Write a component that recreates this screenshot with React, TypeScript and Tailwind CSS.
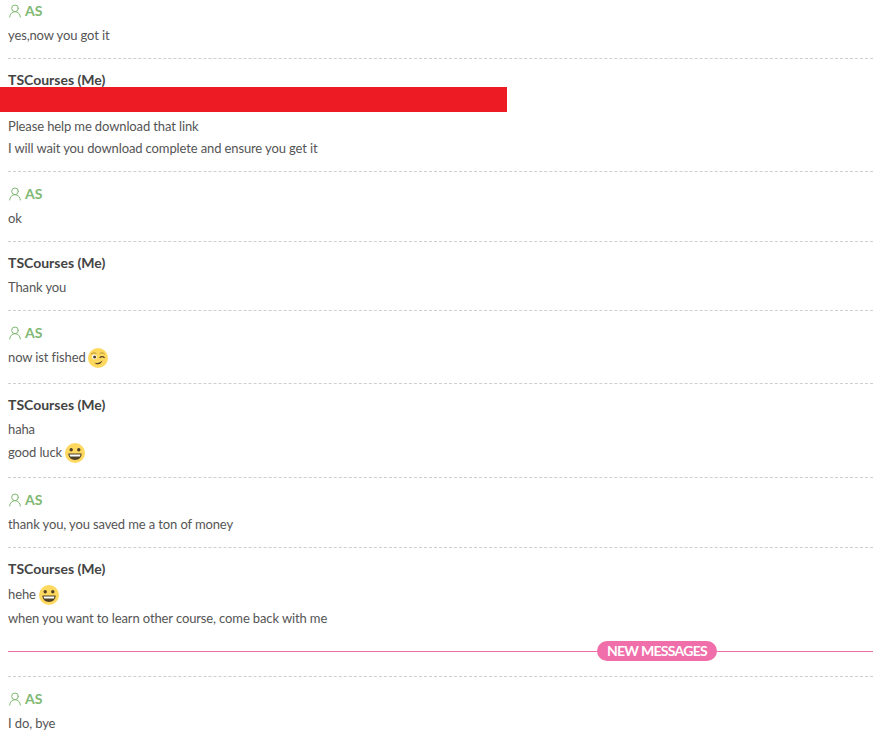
import React from 'react';
import { UserRound } from 'lucide-react';

const WinkEmoji = () => (
  <svg width="20" height="20" viewBox="0 0 20 20" className="inline-block shrink-0">
    <circle cx="10" cy="10" r="10" fill="#ffd95f" />
    <circle cx="6.4" cy="9" r="2.4" fill="#ffffff" />
    <circle cx="6.6" cy="9" r="1.5" fill="#4f4226" />
    <path d="M3 6.2 C4.4 4.8 6.6 4.6 8.4 5.4" fill="none" stroke="#a98a2e" strokeWidth="0.9" />
    <path d="M11.8 5.4 C13.2 4.6 15 4.8 16.6 6" fill="none" stroke="#a98a2e" strokeWidth="0.9" />
    <path d="M11.6 9.8 C13 8.4 15 8.4 16.6 9.8" fill="none" stroke="#4f4226" strokeWidth="1.2" />
    <path d="M6.4 14.4 C9 15.6 12 15 14.4 12.6 C13.6 16.6 8.6 17.6 6.4 14.4 Z" fill="#4f4226" />
  </svg>
);

const GrinEmoji = () => (
  <svg width="20" height="20" viewBox="0 0 20 20" className="inline-block shrink-0">
    <circle cx="10" cy="10" r="10" fill="#ffd95f" />
    <circle cx="6.2" cy="6.8" r="1.7" fill="#4f4226" />
    <circle cx="13.8" cy="6.8" r="1.7" fill="#4f4226" />
    <path d="M3.4 10.6 H16.6 C16.6 14.6 13.8 17 10 17 C6.2 17 3.4 14.6 3.4 10.6 Z" fill="#4f4226" />
    <path d="M4.6 11.4 H15.4 C15.4 12.4 15.1 13.2 14.8 13.6 H5.2 C4.9 13.2 4.6 12.4 4.6 11.4 Z" fill="#ffffff" />
  </svg>
);

const Customer = () => (
  <div className="flex h-5 items-center gap-[2px] text-sm font-bold text-[#7fb873]">
    <UserRound size={16} strokeWidth={1.5} className="-ml-px" />
    <span>AS</span>
  </div>
);

const Me = () => <div className="h-5 text-sm leading-[18px] font-bold text-[#444444]">TSCourses (Me)</div>;

const Row = ({ pb, children }: { pb: string; children: React.ReactNode }) => (
  <div className={`border-t border-dashed border-[#cfcfcf] pt-3 ${pb}`}>{children}</div>
);

const Line = ({ children }: { children: React.ReactNode }) => (
  <div className="mt-1 flex h-[22px] items-center text-[13px] tracking-[-0.12px] text-[#555555]">{children}</div>
);

const NextLine = ({ children }: { children: React.ReactNode }) => (
  <div className="flex h-[22px] items-center text-[13px] tracking-[-0.12px] text-[#555555]">{children}</div>
);

const EmojiLine = ({ children }: { children: React.ReactNode }) => (
  <div className="mt-[3px] flex h-6 items-center gap-[3px] text-[13px] tracking-[-0.12px] text-[#555555]">{children}</div>
);

export default function App() {
  return (
    <div className="min-h-[752px] bg-white pt-px pr-[5px] pl-2 font-['Lato','Liberation_Sans',sans-serif]">
      <div className="pb-[11px]">
        <Customer />
        <Line>yes,now you got it</Line>
      </div>
      <Row pb="pb-[11px]">
        <Me />
        <div className="-mt-1 -ml-2 h-[25px] w-[507px] bg-[#ed1c24]" />
        <Line>Please help me download that link</Line>
        <NextLine>I will wait you download complete and ensure you get it</NextLine>
      </Row>
      <Row pb="pb-[11px]">
        <Customer />
        <Line>ok</Line>
      </Row>
      <Row pb="pb-[11px]">
        <Me />
        <div className="mt-[3px] flex h-[22px] items-center text-[13px] tracking-[-0.12px] text-[#555555]">Thank you</div>
      </Row>
      <Row pb="pb-[13px]">
        <Customer />
        <div className="mt-[3px] flex h-6 items-center gap-[2px] text-[13px] tracking-[-0.12px] text-[#555555]">
          now ist fished <WinkEmoji />
        </div>
      </Row>
      <Row pb="pb-3">
        <Me />
        <div className="mt-[3px] flex h-[22px] items-center text-[13px] tracking-[-0.12px] text-[#555555]">haha</div>
        <div className="flex h-6 items-center gap-[3px] text-[13px] tracking-[-0.12px] text-[#555555]">
          good luck <GrinEmoji />
        </div>
      </Row>
      <Row pb="pb-[11px]">
        <Customer />
        <Line>thank you, you saved me a ton of money</Line>
      </Row>
      <Row pb="pb-[15px]">
        <Me />
        <EmojiLine>
          hehe <GrinEmoji />
        </EmojiLine>
        <div className="mt-px flex h-[22px] items-center text-[13px] tracking-[-0.12px] text-[#555555]">
          when you want to learn other course, come back with me
        </div>
        <div className="mt-[11px] flex items-center">
          <div className="h-px flex-1 bg-[#f06ea9]" />
          <div className="flex h-5 w-[120px] items-center justify-center rounded-full bg-[#f06ea9] text-sm font-bold tracking-[-0.7px] text-white">
            NEW MESSAGES
          </div>
          <div className="h-px w-[156px] bg-[#f06ea9]" />
        </div>
      </Row>
      <Row pb="pb-[11px]">
        <Customer />
        <Line>I do, bye</Line>
      </Row>
    </div>
  );
}
